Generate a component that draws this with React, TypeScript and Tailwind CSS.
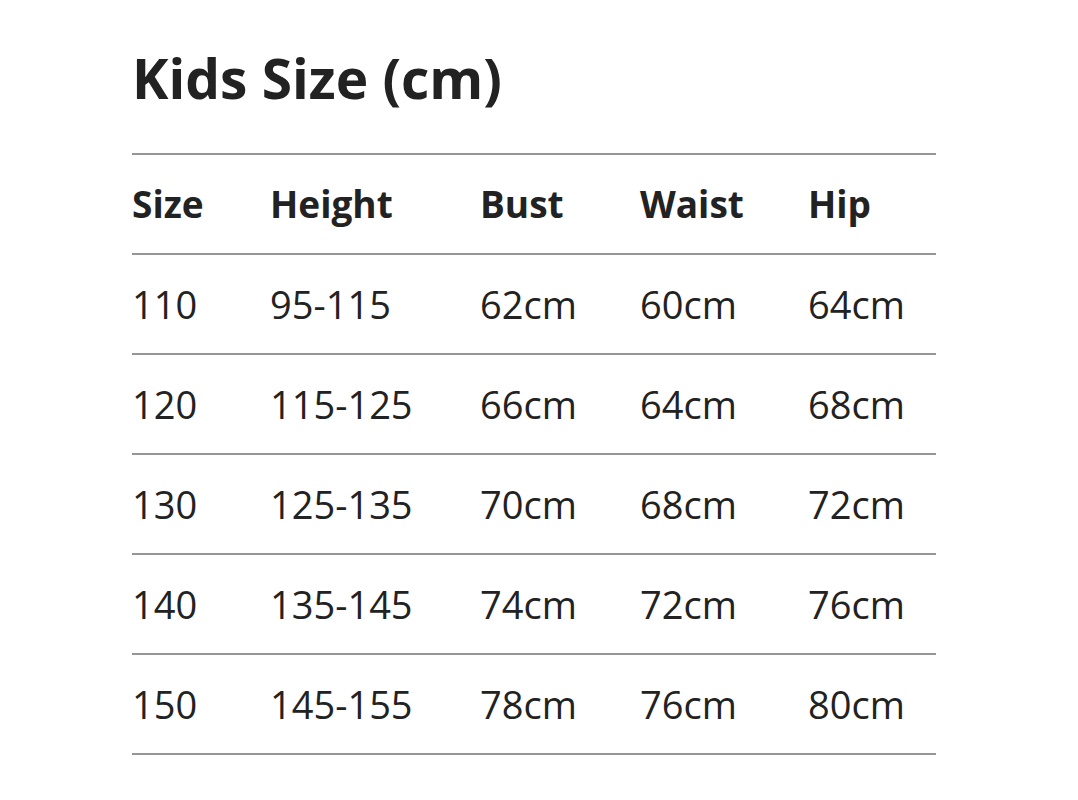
import React from 'react';

const rows = [
  ['110', '95-115', '62cm', '60cm', '64cm'],
  ['120', '115-125', '66cm', '64cm', '68cm'],
  ['130', '125-135', '70cm', '68cm', '72cm'],
  ['140', '135-145', '74cm', '72cm', '76cm'],
  ['150', '145-155', '78cm', '76cm', '80cm'],
];

const headers = ['Size', 'Height', 'Bust', 'Waist', 'Hip'];
const widths = ['w-[138px]', 'w-[210px]', 'w-[160px]', 'w-[168px]', 'w-[128px]'];

const App: React.FC = () => {
  return (
    <div className="w-[1078px] h-[800px] bg-white text-[#222] font-['Open_Sans',sans-serif] pl-[132px] pt-[42px]">
      <h1 className="text-[55px] font-bold leading-[72px] mb-[39px]">Kids Size (cm)</h1>
      <table className="w-[804px] border-collapse table-fixed border-t-2 border-[#969696]">
        <thead>
          <tr className="h-[100px] border-b-2 border-[#969696]">
            {headers.map((h, i) => (
              <th key={h} className={`${widths[i]} p-0 text-left align-middle text-[37px] font-bold`}>
                {h}
              </th>
            ))}
          </tr>
        </thead>
        <tbody>
          {rows.map((r) => (
            <tr key={r[0]} className="h-[100px] border-b-2 border-[#969696]">
              {r.map((c, i) => (
                <td key={i} className="p-0 text-left align-middle text-[38px] font-normal">
                  {c}
                </td>
              ))}
            </tr>
          ))}
        </tbody>
      </table>
    </div>
  );
};

export default App;
